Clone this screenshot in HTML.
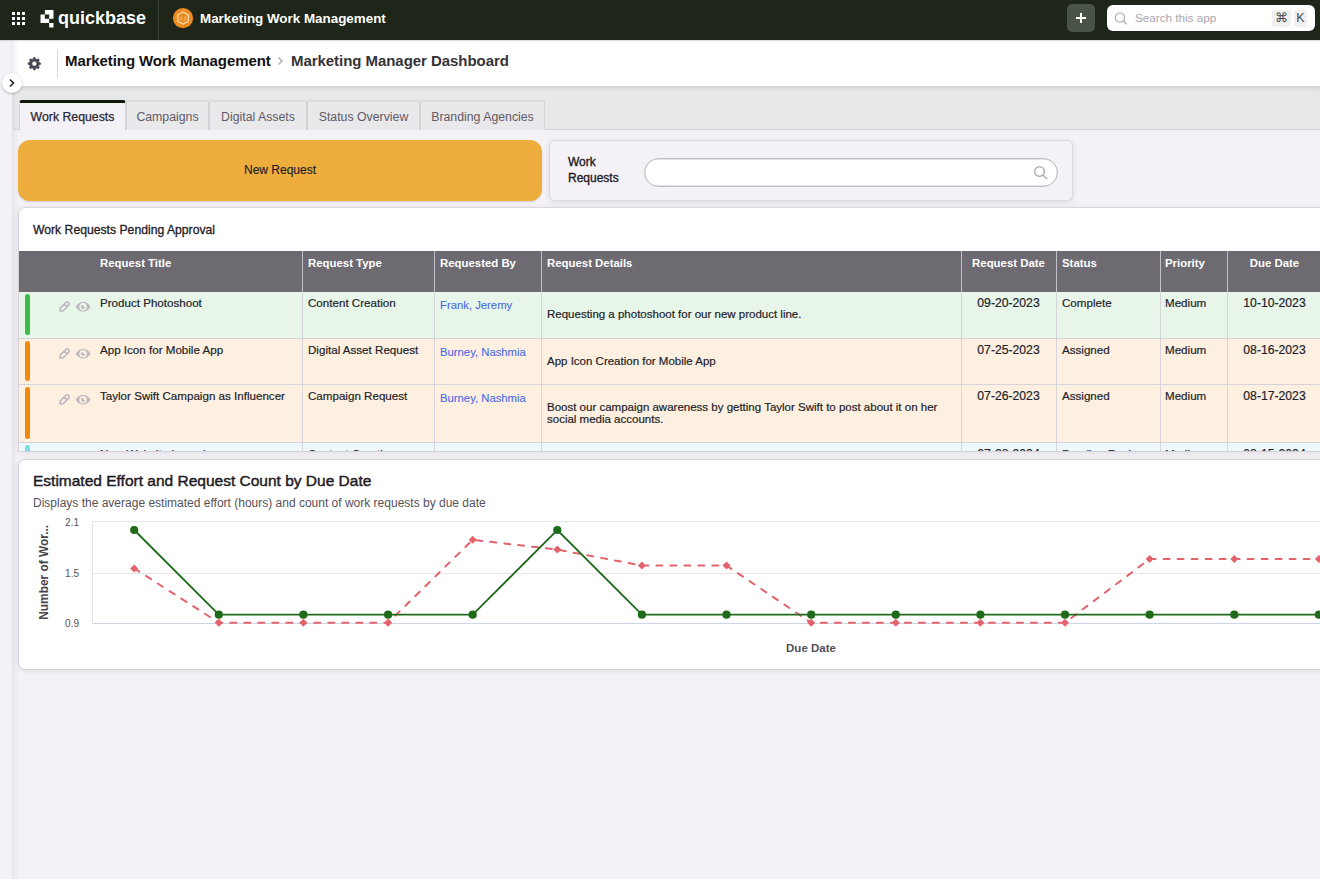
<!DOCTYPE html>
<html><head><meta charset="utf-8">
<style>
*{box-sizing:border-box;margin:0;padding:0}
html,body{width:1320px;height:879px;overflow:hidden;background:#f4f2f6;font-family:"Liberation Sans",sans-serif;color:#2b2631}
.a{position:absolute}
#nav{left:0;top:0;width:1320px;height:40px;background:#1d2619;box-shadow:0 1px 1px rgba(0,0,0,.12);z-index:2}
#strip{left:0;top:40px;width:13px;height:839px;background:#f4f2f6;border-right:1px solid #e3e1e5}
#sshadow{left:13px;top:86px;width:6px;height:793px;background:linear-gradient(to right,rgba(60,50,70,.05),rgba(60,50,70,0))}
#hdr{left:12px;top:40px;width:1308px;height:46px;background:linear-gradient(to right,#efeef1 0,#f7f7f8 3px,#fff 8px);box-shadow:0 2px 3px -1px rgba(0,0,0,.16)}
#tabbar{left:13px;top:86px;width:1307px;height:44px;background:#e8e7ea;border-bottom:1px solid #d3d2d6;box-shadow:inset 0 5px 5px -3px rgba(0,0,0,.10), inset 5px 0 5px -4px rgba(0,0,0,.06)}
.tab{top:100px;height:30px;background:#e9e8eb;border:1px solid #d3d2d6;border-top:2px solid #dcdbdf;border-bottom:none;border-radius:3px 3px 0 0;font-size:12.3px;color:#5f5b65;text-align:center;line-height:16px;padding-top:7px}
.tab.on{background:#f4f2f6;border-top:3px solid #0f1a0c;padding-top:6px;color:#2b2631;-webkit-text-stroke:0.25px #2b2631}
.hd{font-size:11.4px;font-weight:bold;color:#fff;line-height:14px;white-space:nowrap}
.cl{font-size:11.6px;color:#231e29;line-height:14px;white-space:nowrap;-webkit-text-stroke:0.2px #231e29}
.dd{font-size:12.2px}
.lk{color:#4a6ae6;-webkit-text-stroke:0.1px #4a6ae6;font-size:11.3px}
.dt{font-size:11.5px;color:#231e29;line-height:11.7px;white-space:nowrap;-webkit-text-stroke:0.2px #231e29}
</style></head><body>
<div id="nav" class="a">
  <svg class="a" style="left:12px;top:12px" width="14" height="14" viewBox="0 0 14 14" fill="#fff">
    <rect x="0" y="0" width="3" height="3"/><rect x="5" y="0" width="3" height="3"/><rect x="10" y="0" width="3" height="3"/>
    <rect x="0" y="5" width="3" height="3"/><rect x="5" y="5" width="3" height="3"/><rect x="10" y="5" width="3" height="3"/>
    <rect x="0" y="10" width="3" height="3"/><rect x="5" y="10" width="3" height="3"/><rect x="10" y="10" width="3" height="3"/>
  </svg>
  <svg class="a" style="left:0;top:0" width="60" height="40" viewBox="0 0 60 40" fill="#fff"><path d="M44.83 10.10h4.33v4.33h-4.33zM49.16 10.10h4.33v4.33h-4.33zM49.16 14.43h4.33v4.33h-4.33zM40.50 14.43h4.33v4.33h-4.33zM40.50 18.76h4.33v4.33h-4.33zM44.83 18.76h4.33v4.33h-4.33zM49.16 23.09h4.33v4.33h-4.33z"/></svg>
  <div class="a" style="left:58px;top:6px;font-size:18px;font-weight:bold;color:#fff;line-height:24px">quickbase</div>
  <div class="a" style="left:158px;top:0;width:1px;height:40px;background:#3a4336"></div>
  <svg class="a" style="left:170px;top:5px" width="26" height="26" viewBox="0 0 26 26"><circle cx="13" cy="13.2" r="10.1" fill="#e98c22"/><path d="M13 7.1l5.3 3v6.1l-5.3 3-5.3-3v-6.1z" fill="none" stroke="#fbe3c4" stroke-width="1.1"/><path d="M10.2 12.6h1.3M10.2 14.6h1.3M14.5 12.6h1.3M14.5 14.6h1.3" stroke="#fbe3c4" stroke-width="0.9"/></svg>
  <div class="a" style="left:200px;top:11px;font-size:13.4px;font-weight:bold;color:#fff;line-height:16px">Marketing Work Management</div>
  <div class="a" style="left:1067px;top:4px;width:28px;height:28px;border-radius:5px;background:#4a5446"></div>
  <div class="a" style="left:1076px;top:17px;width:10px;height:2px;background:#fff"></div>
  <div class="a" style="left:1080px;top:13px;width:2px;height:10px;background:#fff"></div>
  <div class="a" style="left:1107px;top:5px;width:208px;height:26px;border-radius:6px;background:#fff"></div>
  <svg class="a" style="left:1110px;top:9px" width="20" height="20" viewBox="0 0 20 20"><circle cx="10" cy="8.5" r="4.6" fill="none" stroke="#b5b3b8" stroke-width="1.4"/><path d="M13.3 11.8l2.9 3" stroke="#b5b3b8" stroke-width="1.4" stroke-linecap="round"/></svg>
  <div class="a" style="left:1135px;top:10px;font-size:11.7px;color:#a9a6ad;line-height:16px">Search this app</div>
  <div class="a" style="left:1272px;top:10px;width:19px;height:17px;border-radius:3px;background:#f0f0f1;font-size:12.5px;color:#4b4850;text-align:center;line-height:17px">&#8984;</div>
  <div class="a" style="left:1294px;top:10px;width:13px;height:17px;border-radius:3px;background:#f0f0f1;font-size:12.5px;color:#4b4850;text-align:center;line-height:17px">K</div>
</div>
<div id="strip" class="a"></div>
<div id="sshadow" class="a"></div>
<div id="hdr" class="a"></div>
<div id="tabbar" class="a"></div>
<div class="a tab on" style="left:19px;width:107px">Work Requests</div>
<div class="a tab" style="left:126px;width:83px">Campaigns</div>
<div class="a tab" style="left:209px;width:98px">Digital Assets</div>
<div class="a tab" style="left:307px;width:113px">Status Overview</div>
<div class="a tab" style="left:420px;width:125px">Branding Agencies</div>

<!-- header contents -->
<svg class="a" style="left:0;top:0" width="60" height="90" viewBox="0 0 60 90"><path fill="#4a4652" fill-rule="evenodd" stroke="#4a4652" stroke-width="0.5" stroke-linejoin="round" d="M32.69 59.30 L33.71 57.33 L34.99 57.33 L36.01 59.30 L36.29 59.42 L38.40 58.75 L39.30 59.65 L38.63 61.76 L38.75 62.04 L40.72 63.06 L40.72 64.34 L38.75 65.36 L38.63 65.64 L39.30 67.75 L38.40 68.65 L36.29 67.98 L36.01 68.10 L34.99 70.07 L33.71 70.07 L32.69 68.10 L32.41 67.98 L30.30 68.65 L29.40 67.75 L30.07 65.64 L29.95 65.36 L27.98 64.34 L27.98 63.06 L29.95 62.04 L30.07 61.76 L29.40 59.65 L30.30 58.75 L32.41 59.42Z M36.75 63.70 A2.4 2.4 0 1 0 31.95 63.70 A2.4 2.4 0 1 0 36.75 63.70Z"/></svg>
<div class="a" style="left:57px;top:49px;width:1px;height:29px;background:#d8d7db"></div>
<div class="a" style="left:65px;top:52px;font-size:15px;font-weight:bold;color:#111;line-height:18px;letter-spacing:-0.1px">Marketing Work Management</div>
<svg class="a" style="left:277px;top:56px" width="7" height="10" viewBox="0 0 7 10"><path d="M1.5 1.5l3.5 3.5-3.5 3.5" fill="none" stroke="#a9a6ad" stroke-width="1.3"/></svg>
<div class="a" style="left:291px;top:52px;font-size:15px;font-weight:bold;color:#343338;line-height:18px;letter-spacing:-0.05px">Marketing Manager Dashboard</div>
<div class="a" style="left:2px;top:73px;width:20px;height:20px;border-radius:50%;background:#fff;box-shadow:0 1px 3px rgba(0,0,0,.25)"></div>
<svg class="a" style="left:8px;top:78px" width="8" height="10" viewBox="0 0 8 10"><path d="M2 1.5l3.5 3.5-3.5 3.5" fill="none" stroke="#222" stroke-width="1.6"/></svg>

<!-- buttons row -->
<div class="a" style="left:18px;top:140px;width:524px;height:61px;border-radius:12px;background:#eeae3e;box-shadow:0 1px 2px rgba(0,0,0,.15);font-size:12px;color:#1f1b24;text-align:center;line-height:61px;-webkit-text-stroke:0.15px #1f1b24">New Request</div>
<div class="a" style="left:549px;top:140px;width:524px;height:61px;border-radius:6px;background:#f4f2f6;border:1px solid #dcdadf;box-shadow:0 1px 5px rgba(40,30,50,.12)"></div>
<div class="a" style="left:568px;top:154px;font-size:12px;color:#1f1b24;line-height:16px;-webkit-text-stroke:0.35px #1f1b24">Work<br>Requests</div>
<div class="a" style="left:644px;top:158px;width:414px;height:29px;border-radius:14.5px;background:#fff;border:1px solid #bfbdc2;box-shadow:inset 0 0 0 0.4px #c9c7cc"></div>
<svg class="a" style="left:1033px;top:165px" width="16" height="16" viewBox="0 0 16 16"><circle cx="6.5" cy="6.5" r="4.8" fill="none" stroke="#b1afb5" stroke-width="1.5"/><path d="M10 10l3.7 3.7" stroke="#b1afb5" stroke-width="1.5" stroke-linecap="round"/></svg>
<!-- TABLE -->
<div class="a" style="left:19px;top:208px;width:1310px;height:243px;background:#fff;border-radius:6px 0 0 0;box-shadow:0 0 0 1px rgba(40,30,50,.09),0 1px 6px rgba(40,30,50,.12);overflow:hidden">
<div class="a" style="left:14px;top:14px;font-size:12.2px;color:#1f1b24;line-height:16px;-webkit-text-stroke:0.3px #1f1b24">Work Requests Pending Approval</div>
<div class="a" style="left:0;top:43px;width:1310px;height:41px;background:#6d6a71"></div>
<div class="a hd" style="left:81px;top:48px">Request Title</div>
<div class="a hd" style="left:289px;top:48px">Request Type</div>
<div class="a hd" style="left:421px;top:48px">Requested By</div>
<div class="a hd" style="left:528px;top:48px">Request Details</div>
<div class="a hd" style="left:942px;top:48px;width:95px;text-align:center">Request Date</div>
<div class="a hd" style="left:1043px;top:48px">Status</div>
<div class="a hd" style="left:1146px;top:48px">Priority</div>
<div class="a hd" style="left:1208px;top:48px;width:95px;text-align:center">Due Date</div>
<div class="a" style="left:283px;top:43px;width:1px;height:41px;background:#c3c1c7"></div>
<div class="a" style="left:415px;top:43px;width:1px;height:41px;background:#c3c1c7"></div>
<div class="a" style="left:522px;top:43px;width:1px;height:41px;background:#c3c1c7"></div>
<div class="a" style="left:942px;top:43px;width:1px;height:41px;background:#c3c1c7"></div>
<div class="a" style="left:1037px;top:43px;width:1px;height:41px;background:#c3c1c7"></div>
<div class="a" style="left:1141px;top:43px;width:1px;height:41px;background:#c3c1c7"></div>
<div class="a" style="left:1208px;top:43px;width:1px;height:41px;background:#c3c1c7"></div>
<div class="a" style="left:0;top:84px;width:1310px;height:47px;background:#e8f6ea;border-bottom:1px solid #d6d4da"></div>
<div class="a" style="left:6px;top:86px;width:5px;height:41px;border-radius:3px;background:#3dbb49"></div>
<div class="a" style="left:283px;top:84px;width:1px;height:47px;background:#d6d4da"></div>
<div class="a" style="left:415px;top:84px;width:1px;height:47px;background:#d6d4da"></div>
<div class="a" style="left:522px;top:84px;width:1px;height:47px;background:#d6d4da"></div>
<div class="a" style="left:942px;top:84px;width:1px;height:47px;background:#d6d4da"></div>
<div class="a" style="left:1037px;top:84px;width:1px;height:47px;background:#d6d4da"></div>
<div class="a" style="left:1141px;top:84px;width:1px;height:47px;background:#d6d4da"></div>
<div class="a" style="left:1208px;top:84px;width:1px;height:47px;background:#d6d4da"></div>
<svg class="a" style="left:31px;top:84px" width="50" height="30" viewBox="50 292 50 30"><g transform="translate(59.9 311.2) rotate(-45)"><path d="M0.2 0 L2.7 -2 H10.2 A2 2 0 0 1 10.2 2 H2.7 Z M8.2 -2 V2" fill="none" stroke="#bbb8be" stroke-width="1.5" stroke-linejoin="round"/></g><path fill-rule="evenodd" fill="#bbb8be" d="M75.7 306.8 C79 300.4 87.2 300.4 90.5 306.8 C87.2 313.2 79 313.2 75.7 306.8Z M86.9 306.8 A3.8 3.8 0 1 0 79.3 306.8 A3.8 3.8 0 1 0 86.9 306.8Z"/><path fill="#bbb8be" d="M83.1 306.8 H85.2 A2.1 2.1 0 1 1 83.1 304.7 Z"/></svg>
<div class="a cl" style="left:81px;top:88px">Product Photoshoot</div>
<div class="a cl" style="left:289px;top:88px">Content Creation</div>
<div class="a cl lk" style="left:421px;top:90px">Frank, Jeremy</div>
<div class="a dt" style="left:528px;top:101.14999999999998px">Requesting a photoshoot for our new product line.</div>
<div class="a cl dd" style="left:942px;top:88px;width:95px;text-align:center">09-20-2023</div>
<div class="a cl" style="left:1043px;top:88px">Complete</div>
<div class="a cl" style="left:1146px;top:88px">Medium</div>
<div class="a cl dd" style="left:1208px;top:88px;width:95px;text-align:center">10-10-2023</div>
<div class="a" style="left:0;top:131px;width:1310px;height:46px;background:#fdf0e1;border-bottom:1px solid #d6d4da"></div>
<div class="a" style="left:6px;top:133px;width:5px;height:40px;border-radius:3px;background:#f08a0c"></div>
<div class="a" style="left:283px;top:131px;width:1px;height:46px;background:#d6d4da"></div>
<div class="a" style="left:415px;top:131px;width:1px;height:46px;background:#d6d4da"></div>
<div class="a" style="left:522px;top:131px;width:1px;height:46px;background:#d6d4da"></div>
<div class="a" style="left:942px;top:131px;width:1px;height:46px;background:#d6d4da"></div>
<div class="a" style="left:1037px;top:131px;width:1px;height:46px;background:#d6d4da"></div>
<div class="a" style="left:1141px;top:131px;width:1px;height:46px;background:#d6d4da"></div>
<div class="a" style="left:1208px;top:131px;width:1px;height:46px;background:#d6d4da"></div>
<svg class="a" style="left:31px;top:131px" width="50" height="30" viewBox="50 292 50 30"><g transform="translate(59.9 311.2) rotate(-45)"><path d="M0.2 0 L2.7 -2 H10.2 A2 2 0 0 1 10.2 2 H2.7 Z M8.2 -2 V2" fill="none" stroke="#bbb8be" stroke-width="1.5" stroke-linejoin="round"/></g><path fill-rule="evenodd" fill="#bbb8be" d="M75.7 306.8 C79 300.4 87.2 300.4 90.5 306.8 C87.2 313.2 79 313.2 75.7 306.8Z M86.9 306.8 A3.8 3.8 0 1 0 79.3 306.8 A3.8 3.8 0 1 0 86.9 306.8Z"/><path fill="#bbb8be" d="M83.1 306.8 H85.2 A2.1 2.1 0 1 1 83.1 304.7 Z"/></svg>
<div class="a cl" style="left:81px;top:135px">App Icon for Mobile App</div>
<div class="a cl" style="left:289px;top:135px">Digital Asset Request</div>
<div class="a cl lk" style="left:421px;top:137px">Burney, Nashmia</div>
<div class="a dt" style="left:528px;top:147.64999999999998px">App Icon Creation for Mobile App</div>
<div class="a cl dd" style="left:942px;top:135px;width:95px;text-align:center">07-25-2023</div>
<div class="a cl" style="left:1043px;top:135px">Assigned</div>
<div class="a cl" style="left:1146px;top:135px">Medium</div>
<div class="a cl dd" style="left:1208px;top:135px;width:95px;text-align:center">08-16-2023</div>
<div class="a" style="left:0;top:177px;width:1310px;height:58px;background:#fdf0e1;border-bottom:1px solid #d6d4da"></div>
<div class="a" style="left:6px;top:179px;width:5px;height:52px;border-radius:3px;background:#f08a0c"></div>
<div class="a" style="left:283px;top:177px;width:1px;height:58px;background:#d6d4da"></div>
<div class="a" style="left:415px;top:177px;width:1px;height:58px;background:#d6d4da"></div>
<div class="a" style="left:522px;top:177px;width:1px;height:58px;background:#d6d4da"></div>
<div class="a" style="left:942px;top:177px;width:1px;height:58px;background:#d6d4da"></div>
<div class="a" style="left:1037px;top:177px;width:1px;height:58px;background:#d6d4da"></div>
<div class="a" style="left:1141px;top:177px;width:1px;height:58px;background:#d6d4da"></div>
<div class="a" style="left:1208px;top:177px;width:1px;height:58px;background:#d6d4da"></div>
<svg class="a" style="left:31px;top:177px" width="50" height="30" viewBox="50 292 50 30"><g transform="translate(59.9 311.2) rotate(-45)"><path d="M0.2 0 L2.7 -2 H10.2 A2 2 0 0 1 10.2 2 H2.7 Z M8.2 -2 V2" fill="none" stroke="#bbb8be" stroke-width="1.5" stroke-linejoin="round"/></g><path fill-rule="evenodd" fill="#bbb8be" d="M75.7 306.8 C79 300.4 87.2 300.4 90.5 306.8 C87.2 313.2 79 313.2 75.7 306.8Z M86.9 306.8 A3.8 3.8 0 1 0 79.3 306.8 A3.8 3.8 0 1 0 86.9 306.8Z"/><path fill="#bbb8be" d="M83.1 306.8 H85.2 A2.1 2.1 0 1 1 83.1 304.7 Z"/></svg>
<div class="a cl" style="left:81px;top:181px">Taylor Swift Campaign as Influencer</div>
<div class="a cl" style="left:289px;top:181px">Campaign Request</div>
<div class="a cl lk" style="left:421px;top:183px">Burney, Nashmia</div>
<div class="a dt" style="left:528px;top:193.8px">Boost our campaign awareness by getting Taylor Swift to post about it on her<br>social media accounts.</div>
<div class="a cl dd" style="left:942px;top:181px;width:95px;text-align:center">07-26-2023</div>
<div class="a cl" style="left:1043px;top:181px">Assigned</div>
<div class="a cl" style="left:1146px;top:181px">Medium</div>
<div class="a cl dd" style="left:1208px;top:181px;width:95px;text-align:center">08-17-2023</div>
<div class="a" style="left:0;top:235px;width:1310px;height:46px;background:#ecf8fb;border-bottom:1px solid #d6d4da"></div>
<div class="a" style="left:6px;top:237px;width:5px;height:40px;border-radius:3px;background:#7ddbe5"></div>
<div class="a" style="left:283px;top:235px;width:1px;height:46px;background:#d6d4da"></div>
<div class="a" style="left:415px;top:235px;width:1px;height:46px;background:#d6d4da"></div>
<div class="a" style="left:522px;top:235px;width:1px;height:46px;background:#d6d4da"></div>
<div class="a" style="left:942px;top:235px;width:1px;height:46px;background:#d6d4da"></div>
<div class="a" style="left:1037px;top:235px;width:1px;height:46px;background:#d6d4da"></div>
<div class="a" style="left:1141px;top:235px;width:1px;height:46px;background:#d6d4da"></div>
<div class="a" style="left:1208px;top:235px;width:1px;height:46px;background:#d6d4da"></div>
<svg class="a" style="left:31px;top:235px" width="50" height="30" viewBox="50 292 50 30"><g transform="translate(59.9 311.2) rotate(-45)"><path d="M0.2 0 L2.7 -2 H10.2 A2 2 0 0 1 10.2 2 H2.7 Z M8.2 -2 V2" fill="none" stroke="#bbb8be" stroke-width="1.5" stroke-linejoin="round"/></g><path fill-rule="evenodd" fill="#bbb8be" d="M75.7 306.8 C79 300.4 87.2 300.4 90.5 306.8 C87.2 313.2 79 313.2 75.7 306.8Z M86.9 306.8 A3.8 3.8 0 1 0 79.3 306.8 A3.8 3.8 0 1 0 86.9 306.8Z"/><path fill="#bbb8be" d="M83.1 306.8 H85.2 A2.1 2.1 0 1 1 83.1 304.7 Z"/></svg>
<div class="a cl" style="left:81px;top:239px">New Website Launch</div>
<div class="a cl" style="left:289px;top:239px">Content Creation</div>
<div class="a cl lk" style="left:421px;top:241px"></div>
<div class="a dt" style="left:528px;top:251.64999999999998px"></div>
<div class="a cl dd" style="left:942px;top:239px;width:95px;text-align:center">07-28-2024</div>
<div class="a cl" style="left:1043px;top:239px">Pending Review</div>
<div class="a cl" style="left:1146px;top:239px">Medium</div>
<div class="a cl dd" style="left:1208px;top:239px;width:95px;text-align:center">08-15-2024</div>
</div>
<!-- /TABLE -->
<!-- CHART -->
<div class="a" style="left:19px;top:460px;width:1310px;height:209px;background:#fff;border-radius:6px 0 0 6px;box-shadow:0 0 0 1px rgba(40,30,50,.09),0 1px 6px rgba(40,30,50,.12)"></div>
<div class="a" style="left:33px;top:472px;font-size:15.5px;color:#1f1b24;line-height:18px;-webkit-text-stroke:0.45px #1f1b24">Estimated Effort and Request Count by Due Date</div>
<div class="a" style="left:33px;top:496px;font-size:12px;color:#56525a;line-height:14px">Displays the average estimated effort (hours) and count of work requests by due date</div>
<svg class="a" style="left:0;top:0" width="1320" height="879" viewBox="0 0 1320 879">
<line x1="92.5" y1="521.5" x2="1320" y2="521.5" stroke="#e6e6e6" stroke-width="1"/>
<line x1="92.5" y1="573.5" x2="1320" y2="573.5" stroke="#e6e6e6" stroke-width="1"/>
<line x1="92.5" y1="623.5" x2="1320" y2="623.5" stroke="#ccd6eb" stroke-width="1"/>
<line x1="92.5" y1="521" x2="92.5" y2="624" stroke="#e6e6e6" stroke-width="1"/>
<polyline points="134.2,568.4 218.8,622.7 303.4,622.7 388.1,622.7 472.7,539.8 557.3,549.6 641.9,565.6 726.5,565.6 811.2,622.7 895.8,622.7 980.4,622.7 1065.0,622.7 1149.6,559.0 1234.3,559.0 1318.9,559.0" fill="none" stroke="#e3636b" stroke-width="2" stroke-dasharray="6,8" stroke-linecap="round"/>
<path d="M134.2 564.4L138.2 568.4L134.2 572.4L130.2 568.4Z" fill="#e3636b"/>
<path d="M218.8 618.7L222.8 622.7L218.8 626.7L214.8 622.7Z" fill="#e3636b"/>
<path d="M303.4 618.7L307.4 622.7L303.4 626.7L299.4 622.7Z" fill="#e3636b"/>
<path d="M388.1 618.7L392.1 622.7L388.1 626.7L384.1 622.7Z" fill="#e3636b"/>
<path d="M472.7 535.8L476.7 539.8L472.7 543.8L468.7 539.8Z" fill="#e3636b"/>
<path d="M557.3 545.6L561.3 549.6L557.3 553.6L553.3 549.6Z" fill="#e3636b"/>
<path d="M641.9 561.6L645.9 565.6L641.9 569.6L637.9 565.6Z" fill="#e3636b"/>
<path d="M726.5 561.6L730.5 565.6L726.5 569.6L722.5 565.6Z" fill="#e3636b"/>
<path d="M811.2 618.7L815.2 622.7L811.2 626.7L807.2 622.7Z" fill="#e3636b"/>
<path d="M895.8 618.7L899.8 622.7L895.8 626.7L891.8 622.7Z" fill="#e3636b"/>
<path d="M980.4 618.7L984.4 622.7L980.4 626.7L976.4 622.7Z" fill="#e3636b"/>
<path d="M1065.0 618.7L1069.0 622.7L1065.0 626.7L1061.0 622.7Z" fill="#e3636b"/>
<path d="M1149.6 555.0L1153.6 559.0L1149.6 563.0L1145.6 559.0Z" fill="#e3636b"/>
<path d="M1234.3 555.0L1238.3 559.0L1234.3 563.0L1230.3 559.0Z" fill="#e3636b"/>
<path d="M1318.9 555.0L1322.9 559.0L1318.9 563.0L1314.9 559.0Z" fill="#e3636b"/>
<polyline points="134.2,530.0 218.8,614.7 303.4,614.7 388.1,614.7 472.7,614.7 557.3,530.0 641.9,614.7 726.5,614.7 811.2,614.7 895.8,614.7 980.4,614.7 1065.0,614.7 1149.6,614.7 1234.3,614.7 1318.9,614.7" fill="none" stroke="#1f6b1a" stroke-width="1.8"/>
<circle cx="134.2" cy="530.0" r="4.1" fill="#1f6b1a"/>
<circle cx="218.8" cy="614.7" r="4.1" fill="#1f6b1a"/>
<circle cx="303.4" cy="614.7" r="4.1" fill="#1f6b1a"/>
<circle cx="388.1" cy="614.7" r="4.1" fill="#1f6b1a"/>
<circle cx="472.7" cy="614.7" r="4.1" fill="#1f6b1a"/>
<circle cx="557.3" cy="530.0" r="4.1" fill="#1f6b1a"/>
<circle cx="641.9" cy="614.7" r="4.1" fill="#1f6b1a"/>
<circle cx="726.5" cy="614.7" r="4.1" fill="#1f6b1a"/>
<circle cx="811.2" cy="614.7" r="4.1" fill="#1f6b1a"/>
<circle cx="895.8" cy="614.7" r="4.1" fill="#1f6b1a"/>
<circle cx="980.4" cy="614.7" r="4.1" fill="#1f6b1a"/>
<circle cx="1065.0" cy="614.7" r="4.1" fill="#1f6b1a"/>
<circle cx="1149.6" cy="614.7" r="4.1" fill="#1f6b1a"/>
<circle cx="1234.3" cy="614.7" r="4.1" fill="#1f6b1a"/>
<circle cx="1318.9" cy="614.7" r="4.1" fill="#1f6b1a"/>
<text x="79" y="525.5" text-anchor="end" font-size="10" fill="#555" font-family="Liberation Sans">2.1</text>
<text x="79" y="576.5" text-anchor="end" font-size="10" fill="#555" font-family="Liberation Sans">1.5</text>
<text x="79" y="627" text-anchor="end" font-size="10" fill="#555" font-family="Liberation Sans">0.9</text>
<text transform="translate(48 572.3) rotate(-90)" text-anchor="middle" font-size="11.9" font-weight="bold" fill="#4a4650" font-family="Liberation Sans">Number of Wor...</text>
<text x="811" y="652" text-anchor="middle" font-size="11.5" font-weight="bold" fill="#55515b" font-family="Liberation Sans">Due Date</text>
</svg>
<!-- /CHART -->
</body></html>
